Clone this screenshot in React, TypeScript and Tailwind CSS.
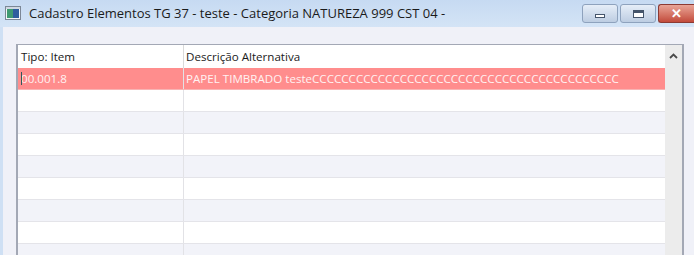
import React from "react";

const rows = Array.from({ length: 9 }, (_, i) => i);

function AppIcon() {
  return (
    <svg width="16" height="16" viewBox="0 0 16 16">
      <rect x="0.5" y="1.5" width="15" height="13" fill="#f4f6f8" stroke="#7c8796" />
      <rect x="2" y="4" width="6" height="9" fill="#3f9a72" />
      <rect x="8" y="4" width="6" height="9" fill="#2f5e9e" />
      <rect x="1" y="2" width="14" height="2" fill="#cfd8e3" />
    </svg>
  );
}

export default function App() {
  const descricao = "PAPEL TIMBRADO teste" + "C".repeat(42);

  return (
    <div
      className="w-[694px] h-[255px] overflow-hidden bg-[#cfe0f4] flex flex-col"
      style={{ fontFamily: '"Open Sans", "Noto Sans", sans-serif' }}
    >
      {/* title bar */}
      <div className="h-[27px] shrink-0 flex items-start bg-gradient-to-b from-[#c6daf2] to-[#d4e4f6]">
        <div className="pl-[5px] pt-[5px]">
          <AppIcon />
        </div>
        <div className="pl-[8px] pt-[3px] text-[13px] text-[#1b1b1b] leading-[20px] whitespace-nowrap">
          Cadastro Elementos TG 37 - teste - Categoria NATUREZA 999 CST 04 -
        </div>
        <div className="ml-auto flex gap-[2px] pt-[4px]">
          <div className="w-[36px] h-[19px] rounded-[3px] border border-[#8ea2bd] bg-gradient-to-b from-[#e6eef8] to-[#bdcde2] flex items-center justify-center">
            <div className="w-[10px] h-[4px] bg-white border border-[#45556b] mt-[4px]" />
          </div>
          <div className="w-[36px] h-[19px] rounded-[3px] border border-[#8ea2bd] bg-gradient-to-b from-[#e6eef8] to-[#bdcde2] flex items-center justify-center">
            <div className="w-[11px] h-[8px] bg-white border border-[#45556b] border-t-[3px]" />
          </div>
          <div className="w-[36px] h-[19px] rounded-l-[3px] border border-r-0 border-[#8c3a33] bg-gradient-to-b from-[#e8a497] to-[#c24a3b] flex items-center justify-center text-white font-bold text-[13px] leading-none">
            ✕
          </div>
        </div>
      </div>

      {/* window body */}
      <div className="flex-1 ml-[3px] bg-[#f0f1f8] pl-[13px] pt-[17px] pr-[10px]">
        <div className="h-full border-l-2 border-t border-r-2 border-[#a3a8b5] bg-white flex">
          <div className="flex-1 flex flex-col text-[11.6px] leading-[21px]">
            {/* header */}
            <div className="h-[23px] shrink-0 flex bg-white text-[#1a1a1a]">
              <div className="w-[166px] pl-[3px] pt-[1px] border-r border-[#dadada]">Tipo: Item</div>
              <div className="flex-1 pl-[2px] pt-[1px]">Descrição Alternativa</div>
            </div>
            {rows.map((i) => {
              const selected = i === 0;
              const bg = selected ? "bg-[#ff8d8d]" : i % 2 === 0 ? "bg-[#f2f3f9]" : "bg-white";
              return (
                <div
                  key={i}
                  className={`h-[22px] shrink-0 flex border-b ${selected ? "border-[#f8b4b4] text-[#fff2f2]" : "border-[#e4e4e9]"} ${bg}`}
                >
                  <div className="relative w-[166px] overflow-hidden border-r border-[#e2e2e6] pl-[3px]">
                    {selected && (
                      <>
                        <span className="whitespace-nowrap">00.001.8</span>
                        <span className="absolute left-[3px] top-[4px] w-[1px] h-[13px] bg-[#2f5a5a]" />
                      </>
                    )}
                  </div>
                  <div className="flex-1 pl-[2px] overflow-hidden whitespace-nowrap">
                    {selected ? descricao : ""}
                  </div>
                </div>
              );
            })}
          </div>
          {/* scrollbar */}
          <div className="w-[17px] shrink-0 bg-[#ececec] flex flex-col">
            <div className="h-[22px] flex items-center justify-center">
              <svg width="9" height="6" viewBox="0 0 9 6">
                <path d="M1 5 L4.5 1.5 L8 5" fill="none" stroke="#4a4a4a" strokeWidth="1.8" />
              </svg>
            </div>
            <div className="flex-1" />
            <div className="h-[4px] mx-[1px] bg-[#cdcdcd]" />
          </div>
        </div>
      </div>
    </div>
  );
}
